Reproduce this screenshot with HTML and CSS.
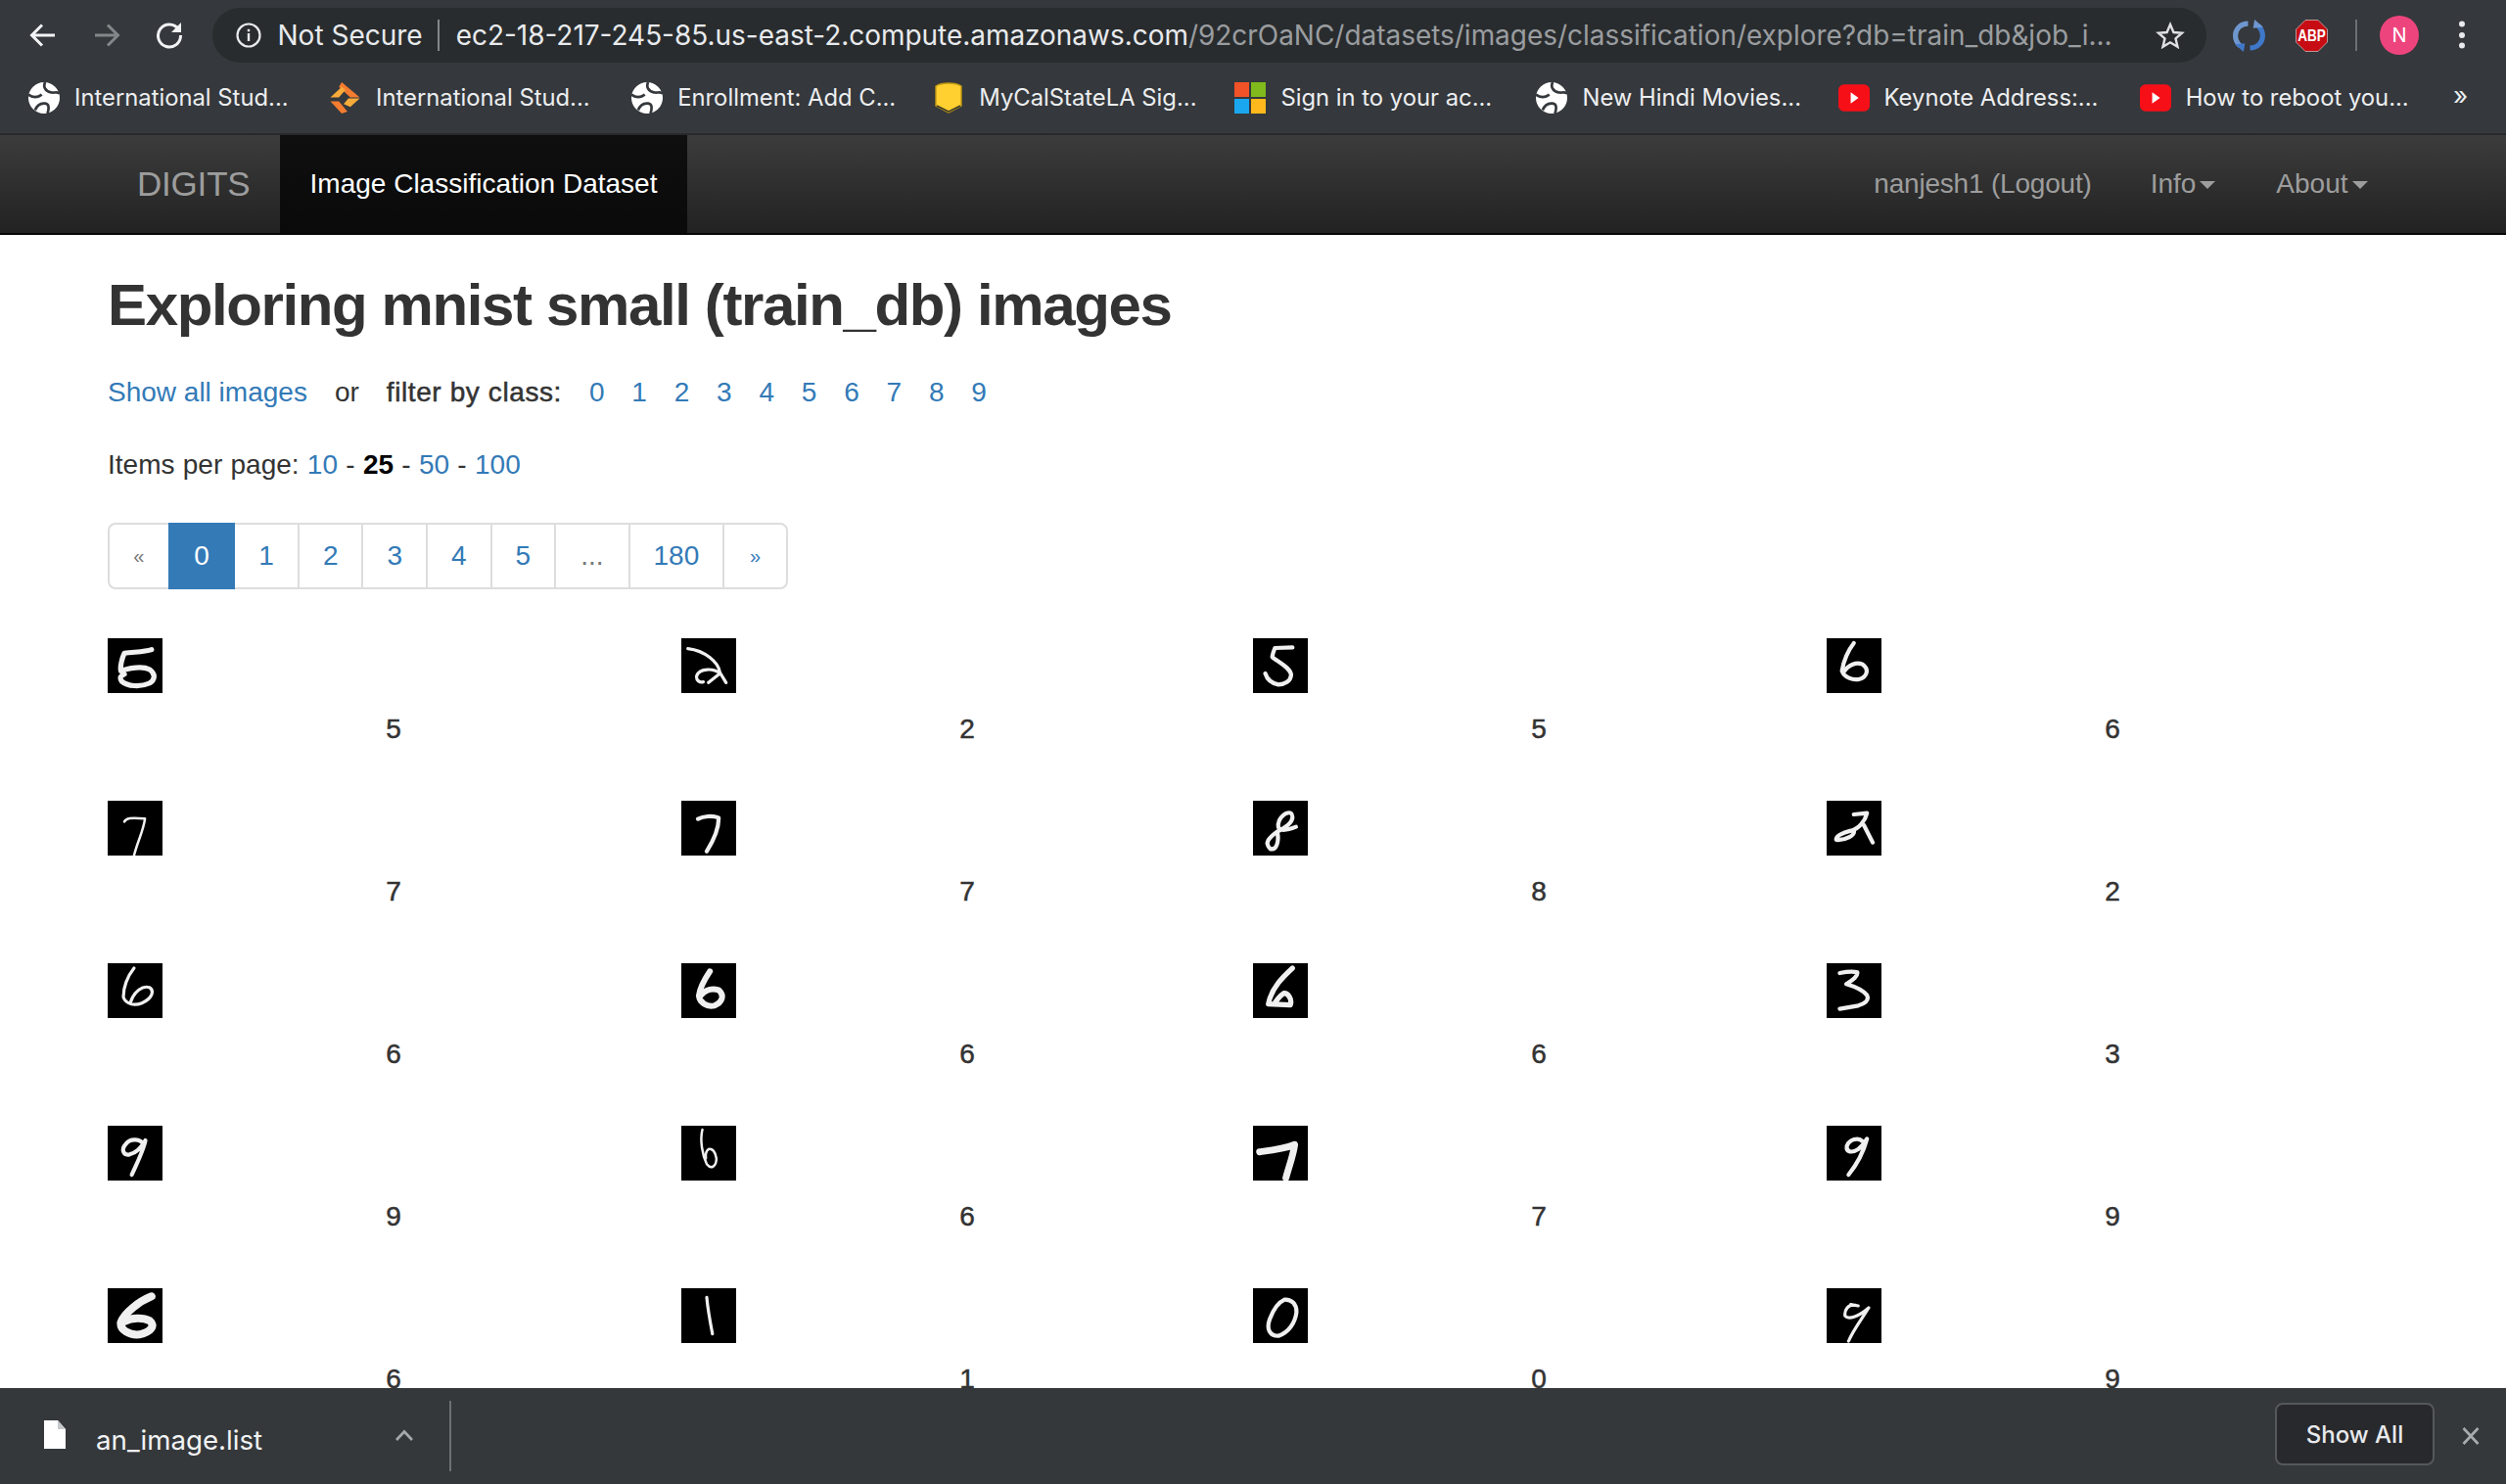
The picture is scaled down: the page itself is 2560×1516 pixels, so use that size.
FILE: index.html
```html
<!DOCTYPE html>
<html lang="en">
<head>
<meta charset="utf-8">
<title>Image Classification Dataset</title>
<link rel="stylesheet" href="styles.css">
</head>
<body>
<svg class="defs" width="0" height="0" aria-hidden="true">
  <symbol id="globe" viewBox="0 0 28 28">
    <circle cx="14" cy="14" r="14" fill="#fff"/>
    <path d="M15 0C13 4 15 8 20 9C23 10 25 8 28 10M0 11C4 14 8 14 12 11M6 25C8 20 11 18.500 15 19C18 19.500 19 22 17 28" fill="none" stroke="#35383c" stroke-width="2.400"/>
  </symbol>
  <symbol id="yt" viewBox="0 0 28 28">
    <rect x="0" y="2" width="28" height="24" rx="5" fill="#f70f18"/>
    <path d="M11 9l7 5-7 5z" fill="#fff"/>
  </symbol>
</svg>

<header class="chrome">
  <div class="toolbar">
    <svg class="nav-icon" viewBox="0 0 28 28"><path d="M26 14H4M13 3.500L2.500 14L13 24.500" fill="none" stroke="#f1f3f4" stroke-width="3"/></svg>
    <svg class="nav-icon dim" viewBox="0 0 28 28"><path d="M2 14H24M15 3.500L25.500 14L15 24.500" fill="none" stroke="#83878a" stroke-width="3"/></svg>
    <svg class="nav-icon" viewBox="0 0 28 28"><path d="M23.500 8A11.500 11.500 0 1 0 25.500 14" fill="none" stroke="#f1f3f4" stroke-width="3"/><path d="M26 1v10H16z" fill="#f1f3f4"/></svg>
    <div class="omnibox">
      <svg class="info" viewBox="0 0 26 26"><circle cx="13" cy="13" r="11.500" fill="none" stroke="#e8eaed" stroke-width="2.200"/><rect x="11.800" y="11" width="2.400" height="8" fill="#e8eaed"/><rect x="11.800" y="6.800" width="2.400" height="2.500" fill="#e8eaed"/></svg>
      <span class="secure">Not Secure</span>
      <span class="omni-sep"></span>
      <span class="url"><span class="host">ec2-18-217-245-85.us-east-2.compute.amazonaws.com</span>/92crOaNC/datasets/images/classification/explore?db=train_db&amp;job_i...</span>
      <svg class="star" viewBox="0 0 30 28"><path d="M15 3l3.400 8 8.600.7-6.500 5.700 2 8.400L15 21.300 7.500 25.800l2-8.400L3 11.700l8.600-.7z" fill="none" stroke="#dfe1e3" stroke-width="2.400"/></svg>
    </div>
    <div class="extensions">
      <svg class="ext sync" viewBox="0 0 32 32"><path d="M15 4C7.500 4 2.500 9.500 2.500 16C2.500 20 4 23 7 26" fill="none" stroke="#6f97cf" stroke-width="5"/><path d="M17 28C24.500 28 29.500 22.500 29.500 16C29.500 12 28 9 25 6" fill="none" stroke="#3f78c9" stroke-width="5"/><path d="M2 24.500l10-1-1.500 8.500z" fill="#3f78c9"/><path d="M30 7.500l-10 1 1.500-8.500z" fill="#6f97cf"/></svg>
      <svg class="ext abp" viewBox="0 0 33 33"><path d="M10 .5h13l9.500 9.500v13L23 32.500H10L.5 23V10z" fill="#c70d13" stroke="#e6e6e6" stroke-width=".6"/><text class="abp-text" transform="translate(16.500 22) scale(1 1.250)">ABP</text></svg>
      <span class="ext-sep"></span>
      <span class="avatar">N</span>
      <svg class="dots" viewBox="0 0 8 32"><circle cx="4" cy="4.500" r="3" fill="#e8eaed"/><circle cx="4" cy="16" r="3" fill="#e8eaed"/><circle cx="4" cy="26.500" r="3" fill="#e8eaed"/></svg>
    </div>
  </div>
  <div class="bookmarks">
    <div class="bm"><svg class="bm-icon"><use href="#globe"/></svg><span>International Stud...</span></div>
    <div class="bm"><svg class="bm-icon" viewBox="0 0 32 33"><path d="M12 0l19 16H21L9 5z" fill="#f47c30"/><path d="M0 16L12 5l4 3-7 8z" fill="#f7ab3b"/><path d="M19 17h12L21 26l-7-3z" fill="#f7ab3b"/><path d="M0 20h9l9 11-6 2z" fill="#f47c30"/></svg><span>International Stud...</span></div>
    <div class="bm"><svg class="bm-icon"><use href="#globe"/></svg><span>Enrollment: Add C...</span></div>
    <div class="bm"><svg class="bm-icon" viewBox="0 0 32 32"><path d="M16 1c5 0 10 1 13 3v20L16 31 3 24V4c3-2 8-3 13-3z" fill="#ffd02f" stroke="#c29a14" stroke-width="1.400"/><path d="M4 24l12 6 12-6" fill="none" stroke="#3c3a2a" stroke-width="1.500"/></svg><span>MyCalStateLA Sig...</span></div>
    <div class="bm"><svg class="bm-icon" viewBox="0 0 32 32"><rect width="15" height="15" fill="#f25228"/><rect x="17" width="15" height="15" fill="#80ba1d"/><rect y="17" width="15" height="15" fill="#1ba6f0"/><rect x="17" y="17" width="15" height="15" fill="#ffb91c"/></svg><span>Sign in to your ac...</span></div>
    <div class="bm"><svg class="bm-icon"><use href="#globe"/></svg><span>New Hindi Movies...</span></div>
    <div class="bm"><svg class="bm-icon"><use href="#yt"/></svg><span>Keynote Address:...</span></div>
    <div class="bm"><svg class="bm-icon"><use href="#yt"/></svg><span>How to reboot you...</span></div>
    <span class="more">»</span>
  </div>
</header>

<div class="viewport">
  <nav class="navbar">
    <a class="brand">DIGITS</a>
    <a class="job">Image Classification Dataset</a>
    <div class="nav-right">
      <a class="user">nanjesh1 (Logout)</a>
      <a class="menu info-menu">Info<i class="caret"></i></a>
      <a class="menu">About<i class="caret"></i></a>
    </div>
  </nav>
  <main class="content">
    <h1>Exploring mnist small (train_db) images</h1>
    <div class="filter">
      <a>Show all images</a>
      <span class="or">or</span>
      <b class="filter-label">filter by class:</b>
      <span class="classes"><a>0</a><a>1</a><a>2</a><a>3</a><a>4</a><a>5</a><a>6</a><a>7</a><a>8</a><a>9</a></span>
    </div>
    <div class="per-page">Items per page: <a>10</a> - <b>25</b> - <a>50</a> - <a>100</a></div>
    <ul class="pagination">
      <li class="edge">«</li><li class="active">0</li><li>1</li><li>2</li><li>3</li><li>4</li><li>5</li><li class="muted">...</li><li>180</li><li class="edge link">»</li>
    </ul>
    <div class="grid">
      <div class="cell"><svg class="digit w5" viewBox="0 0 125 168" preserveAspectRatio="none"><path d="M100 35C85 42 60 42 38 46C33 60 28 85 30 100C50 92 80 85 96 96C110 110 108 128 95 138C75 150 45 148 32 132C26 120 30 115 38 110"/></svg><div class="label">5</div></div>
      <div class="cell"><svg class="digit w3" viewBox="0 0 125 168" preserveAspectRatio="none"><path d="M15 32C55 38 85 75 88 105L102 136M88 108C75 92 42 90 35 115C33 130 42 136 50 134M62 136L88 108"/></svg><div class="label">2</div></div>
      <div class="cell"><svg class="digit w4" viewBox="0 0 125 168" preserveAspectRatio="none"><path d="M90 28L50 30C47 40 44 50 44 58C60 75 85 90 87 112C86 132 72 142 58 142C42 138 32 125 28 108"/></svg><div class="label">5</div></div>
      <div class="cell"><svg class="digit w4" viewBox="0 0 125 168" preserveAspectRatio="none"><path d="M62 15C50 35 38 70 35 100C40 120 60 130 75 125C92 118 98 95 82 80C68 72 50 80 38 105"/></svg><div class="label">6</div></div>

      <div class="cell"><svg class="digit w2" viewBox="0 0 125 168" preserveAspectRatio="none"><path d="M38 64C42 54 50 50 85 55C82 90 68 125 60 168"/></svg><div class="label">7</div></div>
      <div class="cell"><svg class="digit w4" viewBox="0 0 125 168" preserveAspectRatio="none"><path d="M38 56C50 48 70 44 85 52C86 85 72 125 58 155"/></svg><div class="label">7</div></div>
      <div class="cell"><svg class="digit w4" viewBox="0 0 125 168" preserveAspectRatio="none"><path d="M98 80C70 95 50 95 60 60C70 35 90 28 90 50C90 70 70 85 55 95C35 115 25 130 40 148C55 152 60 120 55 95"/></svg><div class="label">8</div></div>
      <div class="cell"><svg class="digit w4" viewBox="0 0 125 168" preserveAspectRatio="none"><path d="M62 42L92 38C88 60 75 85 55 92C35 98 20 110 22 120C45 122 65 105 62 92M85 75L105 128"/></svg><div class="label">2</div></div>

      <div class="cell"><svg class="digit w3" viewBox="0 0 125 168" preserveAspectRatio="none"><path d="M60 15C45 40 35 75 36 105C42 125 60 132 78 122C100 110 108 85 95 74C80 68 60 85 52 120"/></svg><div class="label">6</div></div>
      <div class="cell"><svg class="digit w6" viewBox="0 0 125 168" preserveAspectRatio="none"><path d="M65 25C55 45 42 75 40 100C42 120 58 135 75 130C92 122 100 100 85 82C70 76 55 82 45 98"/></svg><div class="label">6</div></div>
      <div class="cell"><svg class="digit w5" viewBox="0 0 125 168" preserveAspectRatio="none"><path d="M90 15C70 40 42 75 35 125L85 128C90 112 80 90 70 92C60 100 55 112 48 125"/></svg><div class="label">6</div></div>
      <div class="cell"><svg class="digit w4" viewBox="0 0 125 168" preserveAspectRatio="none"><path d="M30 30C45 26 60 24 70 28C72 42 55 55 45 64C60 70 80 78 92 98C98 115 85 125 72 130L30 140"/></svg><div class="label">3</div></div>

      <div class="cell"><svg class="digit w4" viewBox="0 0 125 168" preserveAspectRatio="none"><path d="M82 58C75 40 52 38 42 55C30 72 35 92 50 88C68 82 78 65 86 45C82 75 65 120 55 150"/></svg><div class="label">9</div></div>
      <div class="cell"><svg class="digit w2" viewBox="0 0 125 168" preserveAspectRatio="none"><path d="M48 12C42 45 48 90 58 118C68 135 80 125 80 100C78 80 70 68 62 72C56 78 55 90 56 100"/></svg><div class="label">6</div></div>
      <div class="cell"><svg class="digit w7" viewBox="0 0 125 168" preserveAspectRatio="none"><path d="M15 80C40 76 70 72 95 58C92 90 82 125 75 160"/></svg><div class="label">7</div></div>
      <div class="cell"><svg class="digit w4" viewBox="0 0 125 168" preserveAspectRatio="none"><path d="M82 48C72 34 52 42 46 62C44 82 58 84 72 72C82 62 88 50 92 40C85 75 68 120 50 150"/></svg><div class="label">9</div></div>

      <div class="cell"><svg class="digit w8" viewBox="0 0 125 168" preserveAspectRatio="none"><path d="M100 25C72 40 38 75 30 105C28 128 50 145 72 142C98 135 110 115 96 100C80 88 55 90 38 102"/></svg><div class="label">6</div></div>
      <div class="cell"><svg class="digit w3" viewBox="0 0 125 168" preserveAspectRatio="none"><path d="M58 28C60 60 66 105 71 140"/></svg><div class="label">1</div></div>
      <div class="cell"><svg class="digit w4" viewBox="0 0 125 168" preserveAspectRatio="none"><path d="M72 35C88 34 100 48 99 75C96 105 82 135 58 146C38 146 30 125 38 95C45 70 55 45 72 35"/></svg><div class="label">0</div></div>
      <div class="cell"><svg class="digit w3" viewBox="0 0 125 168" preserveAspectRatio="none"><path d="M55 50L72 54M66 52C50 48 40 65 42 85C50 98 75 85 96 60C82 90 60 130 50 162"/></svg><div class="label">9</div></div>
    </div>
  </main>
</div>

<footer class="downloads">
  <svg class="file" viewBox="0 0 22 29"><path d="M0 0h14l8 9v20H0z" fill="#fff"/><path d="M14 0v9h8z" fill="#c5c7c9"/></svg>
  <span class="file-name">an_image.list</span>
  <svg class="chev" viewBox="0 0 20 12"><path d="M2 11L10 2.500L18 11" fill="none" stroke="#a6a9ab" stroke-width="2.600"/></svg>
  <span class="dl-sep"></span>
  <button class="show-all">Show All</button>
  <svg class="close" viewBox="0 0 18 18"><path d="M1.500 1L16.500 17M16.500 1L1.500 17" stroke="#a9acae" stroke-width="2.600"/></svg>
</footer>
</body>
</html>
```

FILE: styles.css
```css
* { box-sizing: border-box; }
html, body { margin: 0; height: 100%; }
body {
  display: flex;
  flex-direction: column;
  height: 1516px;
  overflow: hidden;
  font-family: "Liberation Sans", Arial, sans-serif;
  font-size: 28px;
  line-height: 40px;
  color: #333;
  background: #fff;
}
.defs { position: absolute; }

/* Browser chrome */
.chrome { background: #35383c; height: 138px; flex: none; border-bottom: 2px solid #28292b; font-family: Inter, "Noto Sans", sans-serif; color: #f1f3f4; }
.toolbar { display: flex; align-items: center; height: 72px; padding-left: 30px; }
.nav-icon { width: 28px; height: 28px; flex: none; margin-right: 37px; }
.nav-icon + .nav-icon + .nav-icon { margin-left: -1px; margin-right: 30px; }
.omnibox { display: flex; align-items: center; width: 2037px; height: 56px; border-radius: 28px; background: #292c2e; padding-left: 24px; flex: none; }
.info { width: 26px; height: 26px; flex: none; margin-right: 16.500px; }
.secure { font-size: 28px; color: #e8eaed; white-space: nowrap; }
.omni-sep { width: 2px; height: 32px; background: #85888a; margin: 0 17px 0 15px; flex: none; }
.url { flex: 1; font-size: 27.950px; color: #9a9da0; white-space: nowrap; overflow: hidden; }
.host { color: #e8eaed; }
.star { width: 30px; height: 28px; flex: none; margin-right: 22px; margin-left: 14px; }
.extensions { display: flex; align-items: center; margin-left: 27px; }
.ext { width: 33px; height: 33px; flex: none; }
.sync { margin-right: 31px; }
.abp-text { font: bold 13.500px "Liberation Sans", sans-serif; fill: #fff; text-anchor: middle; }
.ext-sep { width: 2px; height: 32px; background: #6d7073; margin: 0 23px 0 28px; }
.avatar { width: 40px; height: 40px; border-radius: 50%; background: #ee447d; color: #fff; font-size: 20px; line-height: 40px; text-align: center; }
.dots { width: 8px; height: 32px; margin-left: 40px; }

.bookmarks { display: flex; align-items: center; height: 56px; padding-left: 29px; position: relative; }
.bm { display: flex; align-items: center; width: 308.100px; flex: none; font-size: 23.800px; white-space: nowrap; color: #eceef0; }
.bm-icon { width: 32px; height: 32px; flex: none; margin-right: 15px; }
.more { position: absolute; left: 2506px; top: 6px; font-size: 26px; color: #eceef0; }

/* Page */
.viewport { flex: 1; min-height: 0; overflow: hidden; }
.navbar { display: flex; height: 102px; padding-left: 110px; background: linear-gradient(#3c3c3c, #222); border-bottom: 2px solid #080808; color: #9d9d9d; }
.brand { font-size: 35px; width: 176px; padding-left: 30px; line-height: 100px; letter-spacing: -.2px; }
.job { width: 416px; background: linear-gradient(#0f0f0f, #0a0a0a); color: #fff; text-align: center; line-height: 100px; }
.nav-right { margin-left: auto; display: flex; line-height: 100px; padding-right: 141.500px; }
.user { margin-right: 60px; letter-spacing: -.2px; }
.menu { display: flex; align-items: center; }
.info-menu { margin-right: 62px; }
.caret { width: 0; height: 0; margin-left: 4px; margin-top: 2px; border-top: 8px solid #9d9d9d; border-left: 8px solid transparent; border-right: 8px solid transparent; }

.content { padding-left: 110px; }
a { color: #337ab7; text-decoration: none; }
.navbar a { color: inherit; }
.navbar a.job { color: #fff; }
h1 { margin: 0; padding-top: 39px; font-size: 60px; line-height: 66px; font-weight: bold; color: #333; letter-spacing: -1.380px; }
.filter { display: flex; align-items: center; margin-top: 36px; height: 40px; white-space: nowrap; }
.or { margin-left: 28px; }
.filter-label { margin-left: 28px; font-weight: normal; letter-spacing: .6px; -webkit-text-stroke: .5px #333; }
.classes { display: flex; gap: 27.800px; margin-left: 28px; }
.per-page { margin-top: 34px; height: 40px; word-spacing: .5px; }
.per-page b { color: #000; }
.pagination { display: flex; list-style: none; margin: 39px 0 50px; padding: 0; height: 68px; }
.pagination li { padding: 12px 24px; border: 2px solid #ddd; margin-left: -2px; color: #337ab7; background: #fff; }
.pagination li:first-child { margin-left: 0; border-radius: 8px 0 0 8px; }
.pagination li:last-child { border-radius: 0 8px 8px 0; }
.pagination .edge { color: #777; font-size: 20px; padding-left: 24.300px; padding-right: 24.300px; }
.pagination .edge.link { color: #337ab7; padding-left: 25.700px; padding-right: 25.700px; }
.pagination .active { background: #337ab7; border-color: #337ab7; color: #fff; position: relative; padding-left: 24.500px; padding-right: 24.500px; }
.pagination .muted { color: #777; padding-left: 25px; padding-right: 25px; }

.grid { display: grid; grid-template-columns: 586px 584px 586px 585px; grid-auto-rows: 166px; }
.cell { display: block; }
.digit { display: block; width: 56px; height: 56px; background: #000; }
.digit path { fill: none; stroke: #f0f0f0; stroke-linecap: round; stroke-linejoin: round; vector-effect: non-scaling-stroke; filter: blur(.6px); }
.w2 path { stroke-width: 2.500px; }
.w3 path { stroke-width: 3.200px; }
.w4 path { stroke-width: 4.200px; }
.w5 path { stroke-width: 5.200px; }
.w6 path { stroke-width: 6px; }
.w7 path { stroke-width: 7px; }
.w8 path { stroke-width: 8px; }
.label { width: 584px; margin-top: 17px; line-height: 40px; text-align: center; font-weight: normal; -webkit-text-stroke: .5px #333; }

/* Downloads shelf */
.downloads { display: flex; align-items: center; flex: none; height: 98px; background: #35383b; color: #f1f3f4; padding-left: 45px; font-family: Inter, "Noto Sans", sans-serif; }
.file { width: 22px; height: 29px; flex: none; margin-right: 31px; margin-top: -4px; }
.file-name { font-size: 27.700px; width: 305px; flex: none; margin-top: 8px; }
.chev { width: 20px; height: 12px; flex: none; margin-right: 36px; margin-top: -2px; margin-left: 0; }
.dl-sep { width: 2px; height: 72px; background: #6d7073; flex: none; }
.show-all { margin-left: auto; width: 163px; height: 64px; background: #28292c; border: 2px solid #55585b; border-radius: 8px; color: #e8eaed; font: 500 24px Inter, "Noto Sans", sans-serif; margin-top: -4px; }
.close { width: 18px; height: 18px; flex: none; margin: 0 27px 0 28px; }
```
